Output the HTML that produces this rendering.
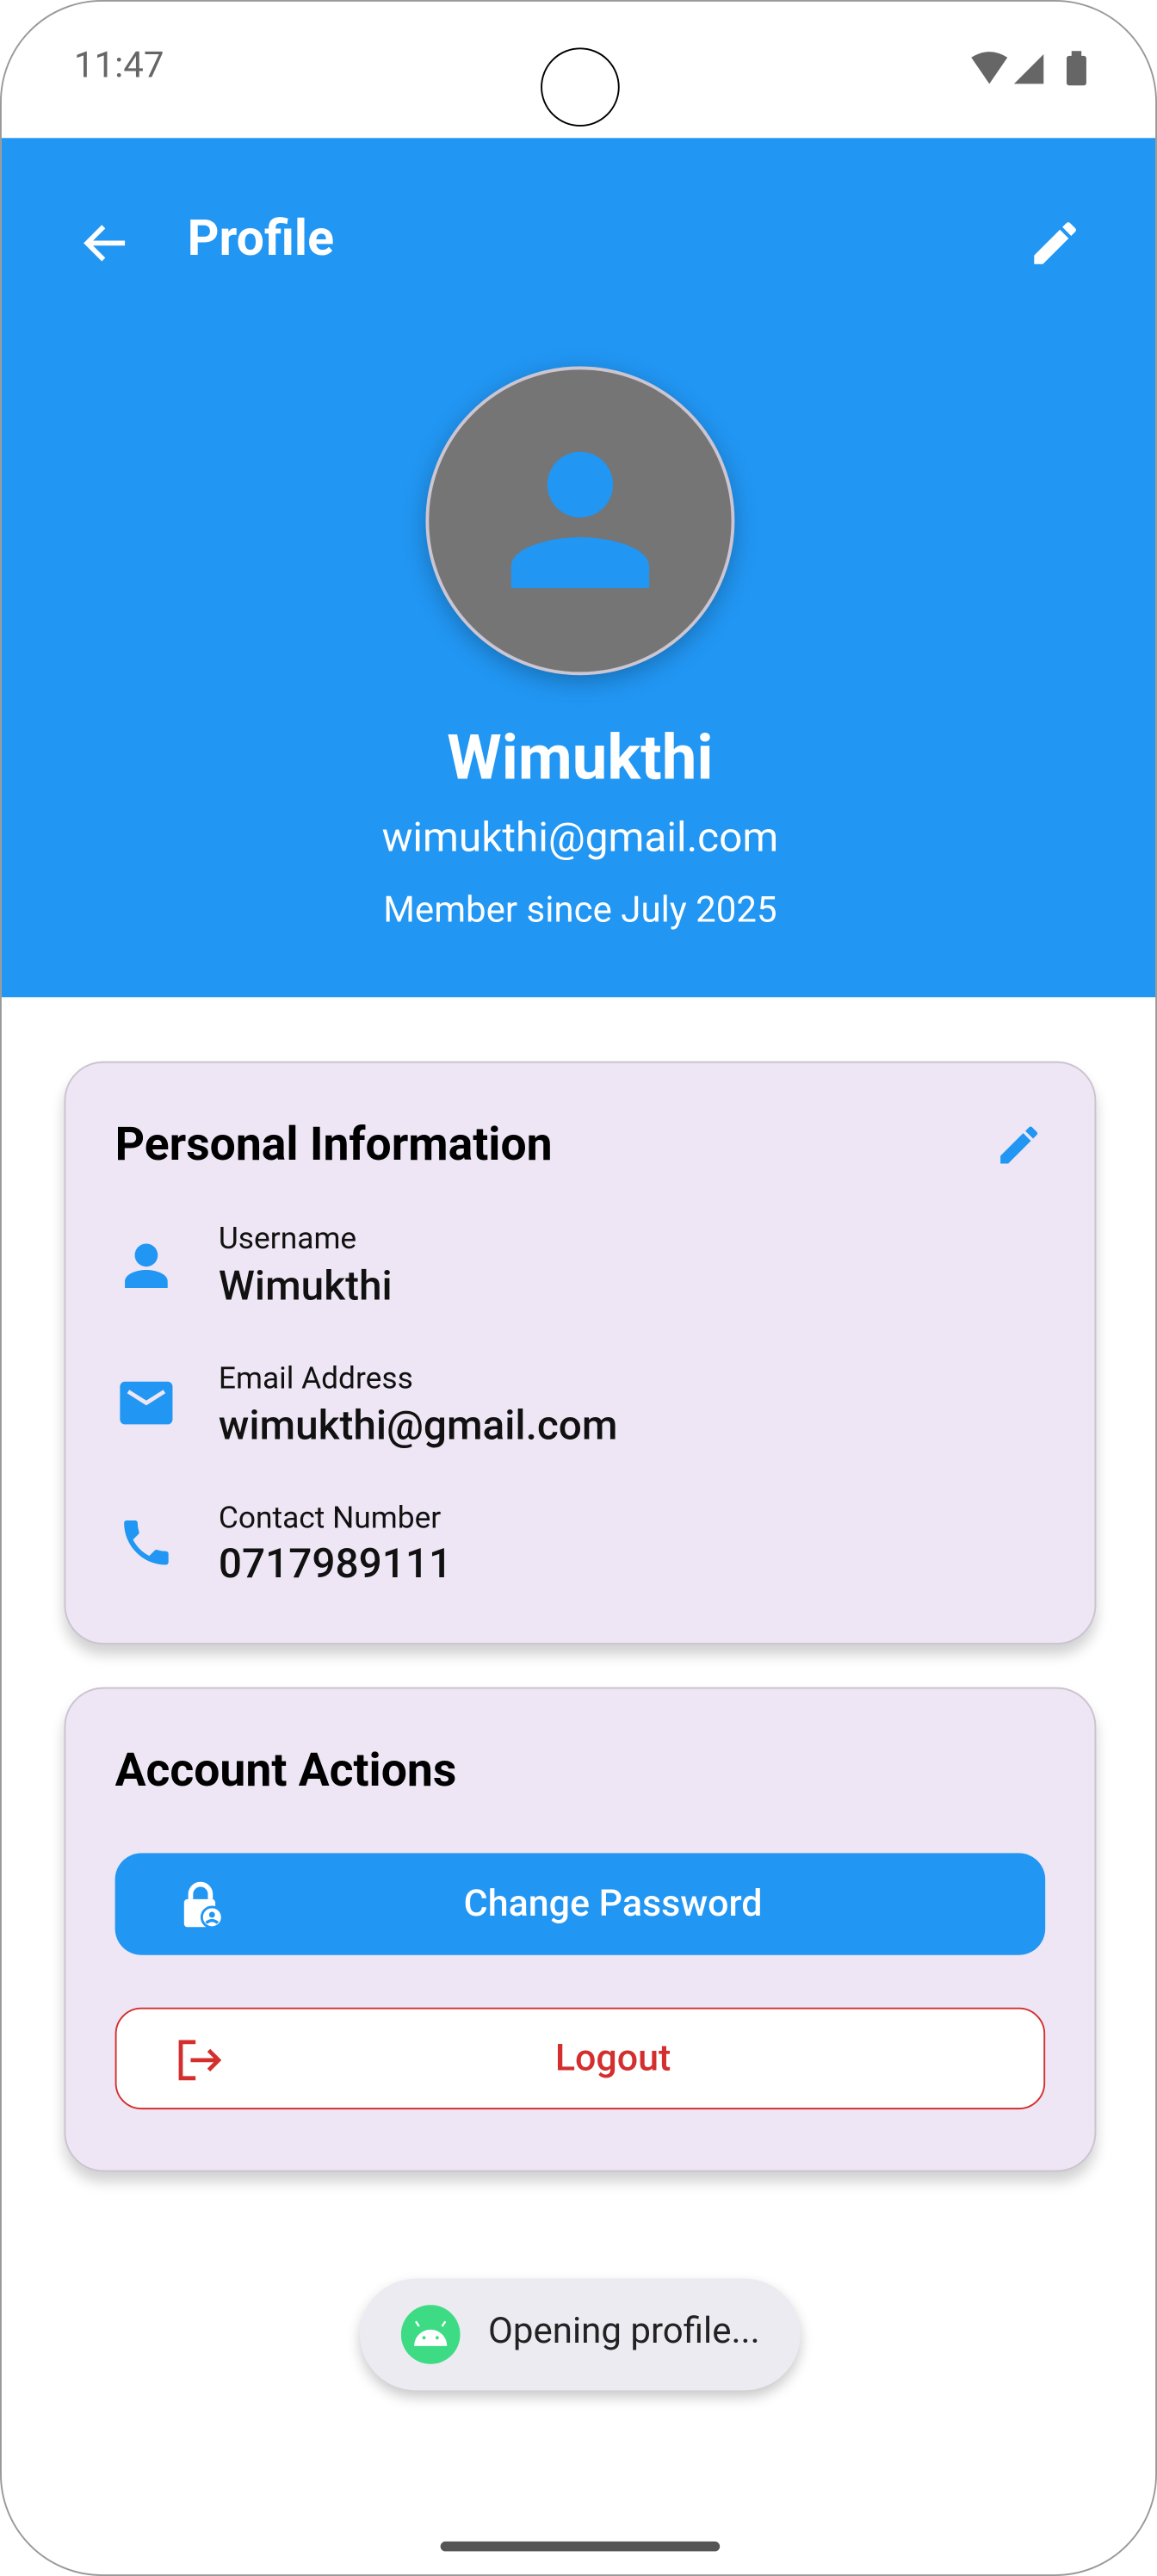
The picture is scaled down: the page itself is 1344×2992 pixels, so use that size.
<!DOCTYPE html>
<html><head><meta charset="utf-8"><style>
html,body{margin:0;padding:0;background:#fff;}
body{width:1344px;height:2992px;overflow:hidden;position:relative;font-family:"Roboto","Liberation Sans",sans-serif;}
#s{position:absolute;left:0;top:0;width:704px;height:1568px;transform:scale(1.90909,1.90816);transform-origin:0 0;}
.frame{position:absolute;left:0;top:0;width:702px;height:1566px;border:1px solid #999;border-radius:62px;overflow:hidden;background:#fff;}
.a{position:absolute;white-space:nowrap;}
.hdr{left:0;top:83px;width:704px;height:523px;background:#2196F3;}
.card{left:38px;width:626px;background:#EEE6F4;border:1px solid #cbc3cf;border-radius:24px;box-shadow:0 6px 8px rgba(0,0,0,0.18);}
.ct{font-weight:bold;font-size:28px;color:#000;}
.lbl{font-size:18.5px;color:#111;left:132px;}
.val{font-size:25px;color:#111;left:132px;font-weight:500;}
.btn{left:69px;width:566px;height:62px;border-radius:16px;box-sizing:border-box;}
</style></head><body><div id="s">
<div class="frame">
<div class="a" style="left:44px;top:27px;font-size:22px;color:#666;">11:47</div>
<div class="a" style="left:328px;top:28px;width:46px;height:46px;border:1.5px solid #000;border-radius:50%;"></div>
<svg class="a" style="left:588px;top:30px" width="76" height="22" viewBox="0 0 76 22">
<path d="M2 4 Q13 -3 24 4 L13 20 Z" fill="#666"/><path d="M28 20 L46 2 L46 20 Z" fill="#666"/><rect x="60" y="3" width="12" height="18" rx="1.5" fill="#666"/><rect x="63" y="0" width="6" height="4" fill="#666"/></svg>
<div class="a hdr"></div>
<svg class="a" style="left:48px;top:133px" width="30" height="28" viewBox="0 0 30 28"><path d="M27 14H5M14 4L4 14L14 24" stroke="#fff" stroke-width="3" fill="none"/></svg>
<div class="a" style="left:113px;top:127px;font-size:30px;font-weight:bold;color:#fff;">Profile</div>
<svg class="a" style="left:624px;top:130px" width="34" height="34" viewBox="0 0 24 24"><path d="M3 17.25V21h3.75L17.81 9.94l-3.75-3.75L3 17.25zM20.71 7.04a1 1 0 000-1.41l-2.34-2.34a1 1 0 00-1.41 0l-1.830 1.83 3.75 3.75 1.83-1.83z" fill="#fff"/></svg>
<div class="a" style="left:258px;top:222px;width:184px;height:184px;border-radius:50%;background:#757575;border:2px solid #ccc5d2;box-shadow:0 4px 14px rgba(0,0,0,0.25);"></div>
<svg class="a" style="left:300px;top:260px" width="104" height="104" viewBox="0 0 104 104"><circle cx="52" cy="34" r="20" fill="#2196F3"/><path d="M10 97 V84 C10 72 34 66 52 66 C70 66 94 72 94 84 V97 Z" fill="#2196F3"/></svg>
<div class="a" style="left:0;width:704px;top:439px;text-align:center;font-size:38px;font-weight:bold;color:#fff;">Wimukthi</div>
<div class="a" style="left:0;width:704px;top:495px;text-align:center;font-size:25px;color:#fff;">wimukthi@gmail.com</div>
<div class="a" style="left:0;width:704px;top:541px;text-align:center;font-size:22px;color:#fff;">Member since July 2025</div>

<div class="a card" style="top:645px;height:353px;"></div>
<div class="a ct" style="left:69px;top:679px;">Personal Information</div>
<svg class="a" style="left:604px;top:681px" width="30" height="30" viewBox="0 0 24 24"><path d="M3 17.25V21h3.75L17.81 9.94l-3.75-3.75L3 17.25zM20.71 7.04a1 1 0 000-1.41l-2.34-2.340a1 1 0 00-1.41 0l-1.83 1.83 3.75 3.75 1.83-1.83z" fill="#2196F3"/></svg>
<svg class="a" style="left:72px;top:754px" width="32" height="32" viewBox="0 0 32 32"><circle cx="16" cy="9" r="7" fill="#2196F3"/><path d="M3 29V25C3 20 11 18 16 18S29 20 29 25V29Z" fill="#2196F3"/></svg>
<div class="a lbl" style="top:742px;">Username</div>
<div class="a val" style="top:768px;">Wimukthi</div>
<svg class="a" style="left:71px;top:838px" width="34" height="32" viewBox="0 0 34 32"><rect x="1" y="2" width="32" height="26" rx="3" fill="#2196F3"/><path d="M6 8L17 15L28 8" stroke="#EEE6F4" stroke-width="2.5" fill="none"/></svg>
<div class="a lbl" style="top:827px;">Email Address</div>
<div class="a val" style="top:853px;">wimukthi@gmail.com</div>
<svg class="a" style="left:70px;top:920px" width="36" height="36" viewBox="0 0 24 24"><path d="M6.62 10.79a15.05 15.050 0 006.59 6.59l2.2-2.2a1 1 0 011.02-.24c1.12.37 2.330.57 3.57.57a1 1 0 011 1V20a1 1 0 01-1 1A17 17 0 013 4a1 1 0 011-1h3.5a1 1 0 011 1c0 1.25.2 2.45.57 3.57a1 1 0 01-.25 1.02l-2.2 2.2z" fill="#2196F3"/></svg>
<div class="a lbl" style="top:912px;">Contact Number</div>
<div class="a val" style="top:937px;">0717989111</div>

<div class="a card" style="top:1026px;height:293px;"></div>
<div class="a ct" style="left:69px;top:1060px;">Account Actions</div>
<div class="a btn" style="top:1127px;background:#2196F3;"></div>
<svg class="a" style="left:108px;top:1144px" width="28" height="30" viewBox="0 0 28 30"><path d="M7 11V8a6 6 0 0112 0v3" stroke="#fff" stroke-width="3" fill="none"/><rect x="3" y="11" width="19" height="17" rx="2" fill="#fff"/><circle cx="20" cy="22" r="7" fill="#2196F3"/><circle cx="20" cy="22" r="5.5" fill="#fff"/><circle cx="20" cy="20.5" r="1.8" fill="#2196F3"/><path d="M16.5 25.5Q20 22.5 23.5 25.5" stroke="#2196F3" stroke-width="1.8" fill="none"/></svg>
<div class="a" style="left:69px;width:606px;top:1145px;text-align:center;font-size:22.5px;font-weight:500;color:#fff;">Change Password</div>
<div class="a btn" style="top:1221px;background:#fff;border:1.5px solid #D32F2F;"></div>
<svg class="a" style="left:106px;top:1240px" width="30" height="26" viewBox="0 0 30 26"><path d="M12 2H3V24H12" stroke="#D32F2F" stroke-width="2.5" fill="none"/><path d="M9 13H26M20 7L26 13L20 19" stroke="#D32F2F" stroke-width="2.5" fill="none"/></svg>
<div class="a" style="left:69px;width:606px;top:1239px;text-align:center;font-size:22.5px;font-weight:500;color:#D32F2F;">Logout</div>

<div class="a" style="left:218px;top:1386px;width:268px;height:68px;border-radius:34px;background:#ECEBF1;box-shadow:0 4px 8px rgba(0,0,0,0.22);"></div>
<svg class="a" style="left:243px;top:1402px" width="36" height="36" viewBox="0 0 36 36"><circle cx="18" cy="18" r="18" fill="#3DDC84"/><path d="M8 25A10 10 0 0128 25Z" fill="#fff"/><path d="M11 13L9 10M25 13L27 10" stroke="#fff" stroke-width="1.2"/><circle cx="14" cy="20" r="1" fill="#3DDC84"/><circle cx="22" cy="20" r="1" fill="#3DDC84"/></svg>
<div class="a" style="left:296px;top:1406px;font-size:22px;color:#222;">Opening profile...</div>
<div class="a" style="left:267px;top:1546px;width:170px;height:6px;border-radius:3px;background:#555;"></div>
</div>
</div></body></html>
